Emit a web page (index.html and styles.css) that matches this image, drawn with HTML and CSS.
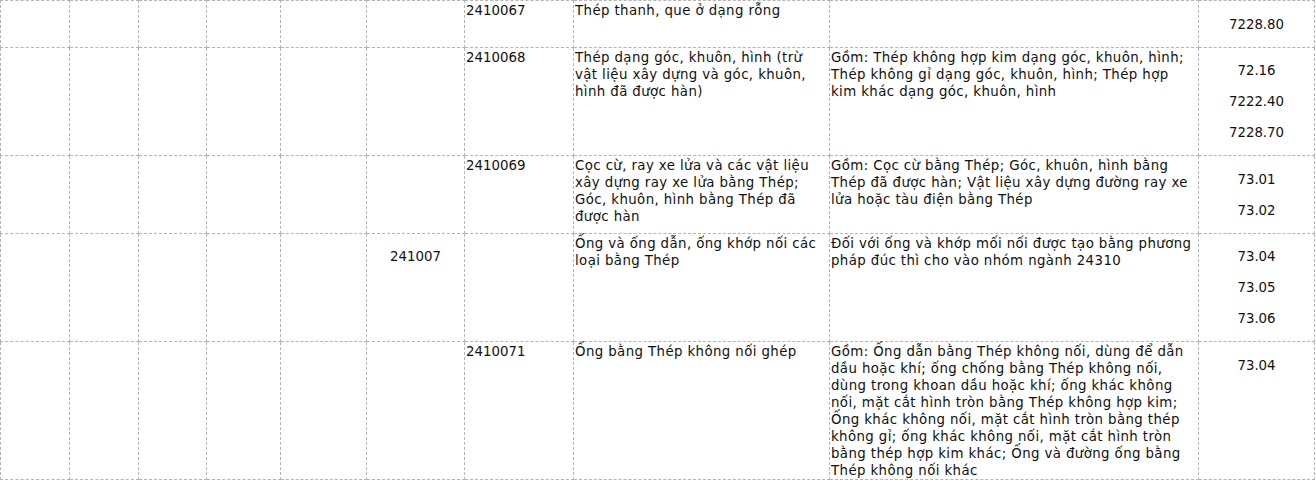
FILE: index.html
```html
<!DOCTYPE html>
<html lang="vi">
<head>
<meta charset="utf-8">
<title>Thép</title>
<link rel="stylesheet" href="styles.css">
</head>
<body>
<table class="grid">
  <colgroup>
    <col class="c1"><col class="c2"><col class="c3"><col class="c4"><col class="c5">
    <col class="c6"><col class="c7"><col class="c8"><col class="c9"><col class="c10">
  </colgroup>
  <tr>
    <td></td><td></td><td></td><td></td><td></td><td></td>
    <td>2410067</td>
    <td class="text">Thép thanh, que ở dạng rỗng</td>
    <td class="text"></td>
    <td class="codes"><p>7228.80</p></td>
  </tr>
  <tr>
    <td></td><td></td><td></td><td></td><td></td><td></td>
    <td>2410068</td>
    <td class="text">Thép dạng góc, khuôn, hình (trừ vật liệu xây dựng và góc, khuôn, hình đã được hàn)</td>
    <td class="text">Gồm: Thép không hợp kim dạng góc, khuôn, hình; Thép không gỉ dạng góc, khuôn, hình; Thép hợp kim khác dạng góc, khuôn, hình</td>
    <td class="codes"><p>72.16</p><p>7222.40</p><p>7228.70</p></td>
  </tr>
  <tr>
    <td></td><td></td><td></td><td></td><td></td><td></td>
    <td>2410069</td>
    <td class="text">Cọc cừ, ray xe lửa và các vật liệu xây dựng ray xe lửa bằng Thép; Góc, khuôn, hình bằng Thép đã được hàn</td>
    <td class="text">Gồm: Cọc cừ bằng Thép; Góc, khuôn, hình bằng Thép đã được hàn; Vật liệu xây dựng đường ray xe lửa hoặc tàu điện bằng Thép</td>
    <td class="codes"><p>73.01</p><p>73.02</p></td>
  </tr>
  <tr>
    <td></td><td></td><td></td><td></td><td></td>
    <td class="codes"><p>241007</p></td>
    <td></td>
    <td class="text">Ống và ống dẫn, ống khớp nối các loại bằng Thép</td>
    <td class="text">Đối với ống và khớp mối nối được tạo bằng phương pháp đúc thì cho vào nhóm ngành 24310</td>
    <td class="codes"><p>73.04</p><p>73.05</p><p>73.06</p></td>
  </tr>
  <tr>
    <td></td><td></td><td></td><td></td><td></td><td></td>
    <td>2410071</td>
    <td class="text">Ống bằng Thép không nối ghép</td>
    <td class="text">Gồm: Ống dẫn bằng Thép không nối, dùng để dẫn dầu hoặc khí; ống chống bằng Thép không nối, dùng trong khoan dầu hoặc khí; ống khác không nối, mặt cắt hình tròn bằng Thép không hợp kim; Ống khác không nối, mặt cắt hình tròn bằng thép không gỉ; ống khác không nối, mặt cắt hình tròn bằng thép hợp kim khác; Ống và đường ống bằng Thép không nối khác</td>
    <td class="codes"><p>73.04</p></td>
  </tr>
</table>
</body>
</html>
```

FILE: styles.css
```css
html, body {
  margin: 0;
  padding: 0;
  background: #fff;
}

.grid {
  border-collapse: collapse;
  table-layout: fixed;
  width: 1314px;
  font-family: "DejaVu Sans", Verdana, sans-serif;
  font-size: 13.33px;
  line-height: 17px;
  color: #111;
}

.grid td {
  border: 1px dashed #b4b4b4;
  padding: 1px 1px 0 1px;
  vertical-align: top;
}

.grid .text {
  letter-spacing: 0.4px;
}

.grid .codes {
  text-align: center;
}

.grid .codes p {
  margin: 13.5px 0;
  line-height: 17.5px;
}

.c1 { width: 69px; }
.c2 { width: 69px; }
.c3 { width: 68px; }
.c4 { width: 74px; }
.c5 { width: 86px; }
.c6 { width: 98px; }
.c7 { width: 109px; }
.c8 { width: 256px; }
.c9 { width: 369px; }
.c10 { width: 116px; }
```
